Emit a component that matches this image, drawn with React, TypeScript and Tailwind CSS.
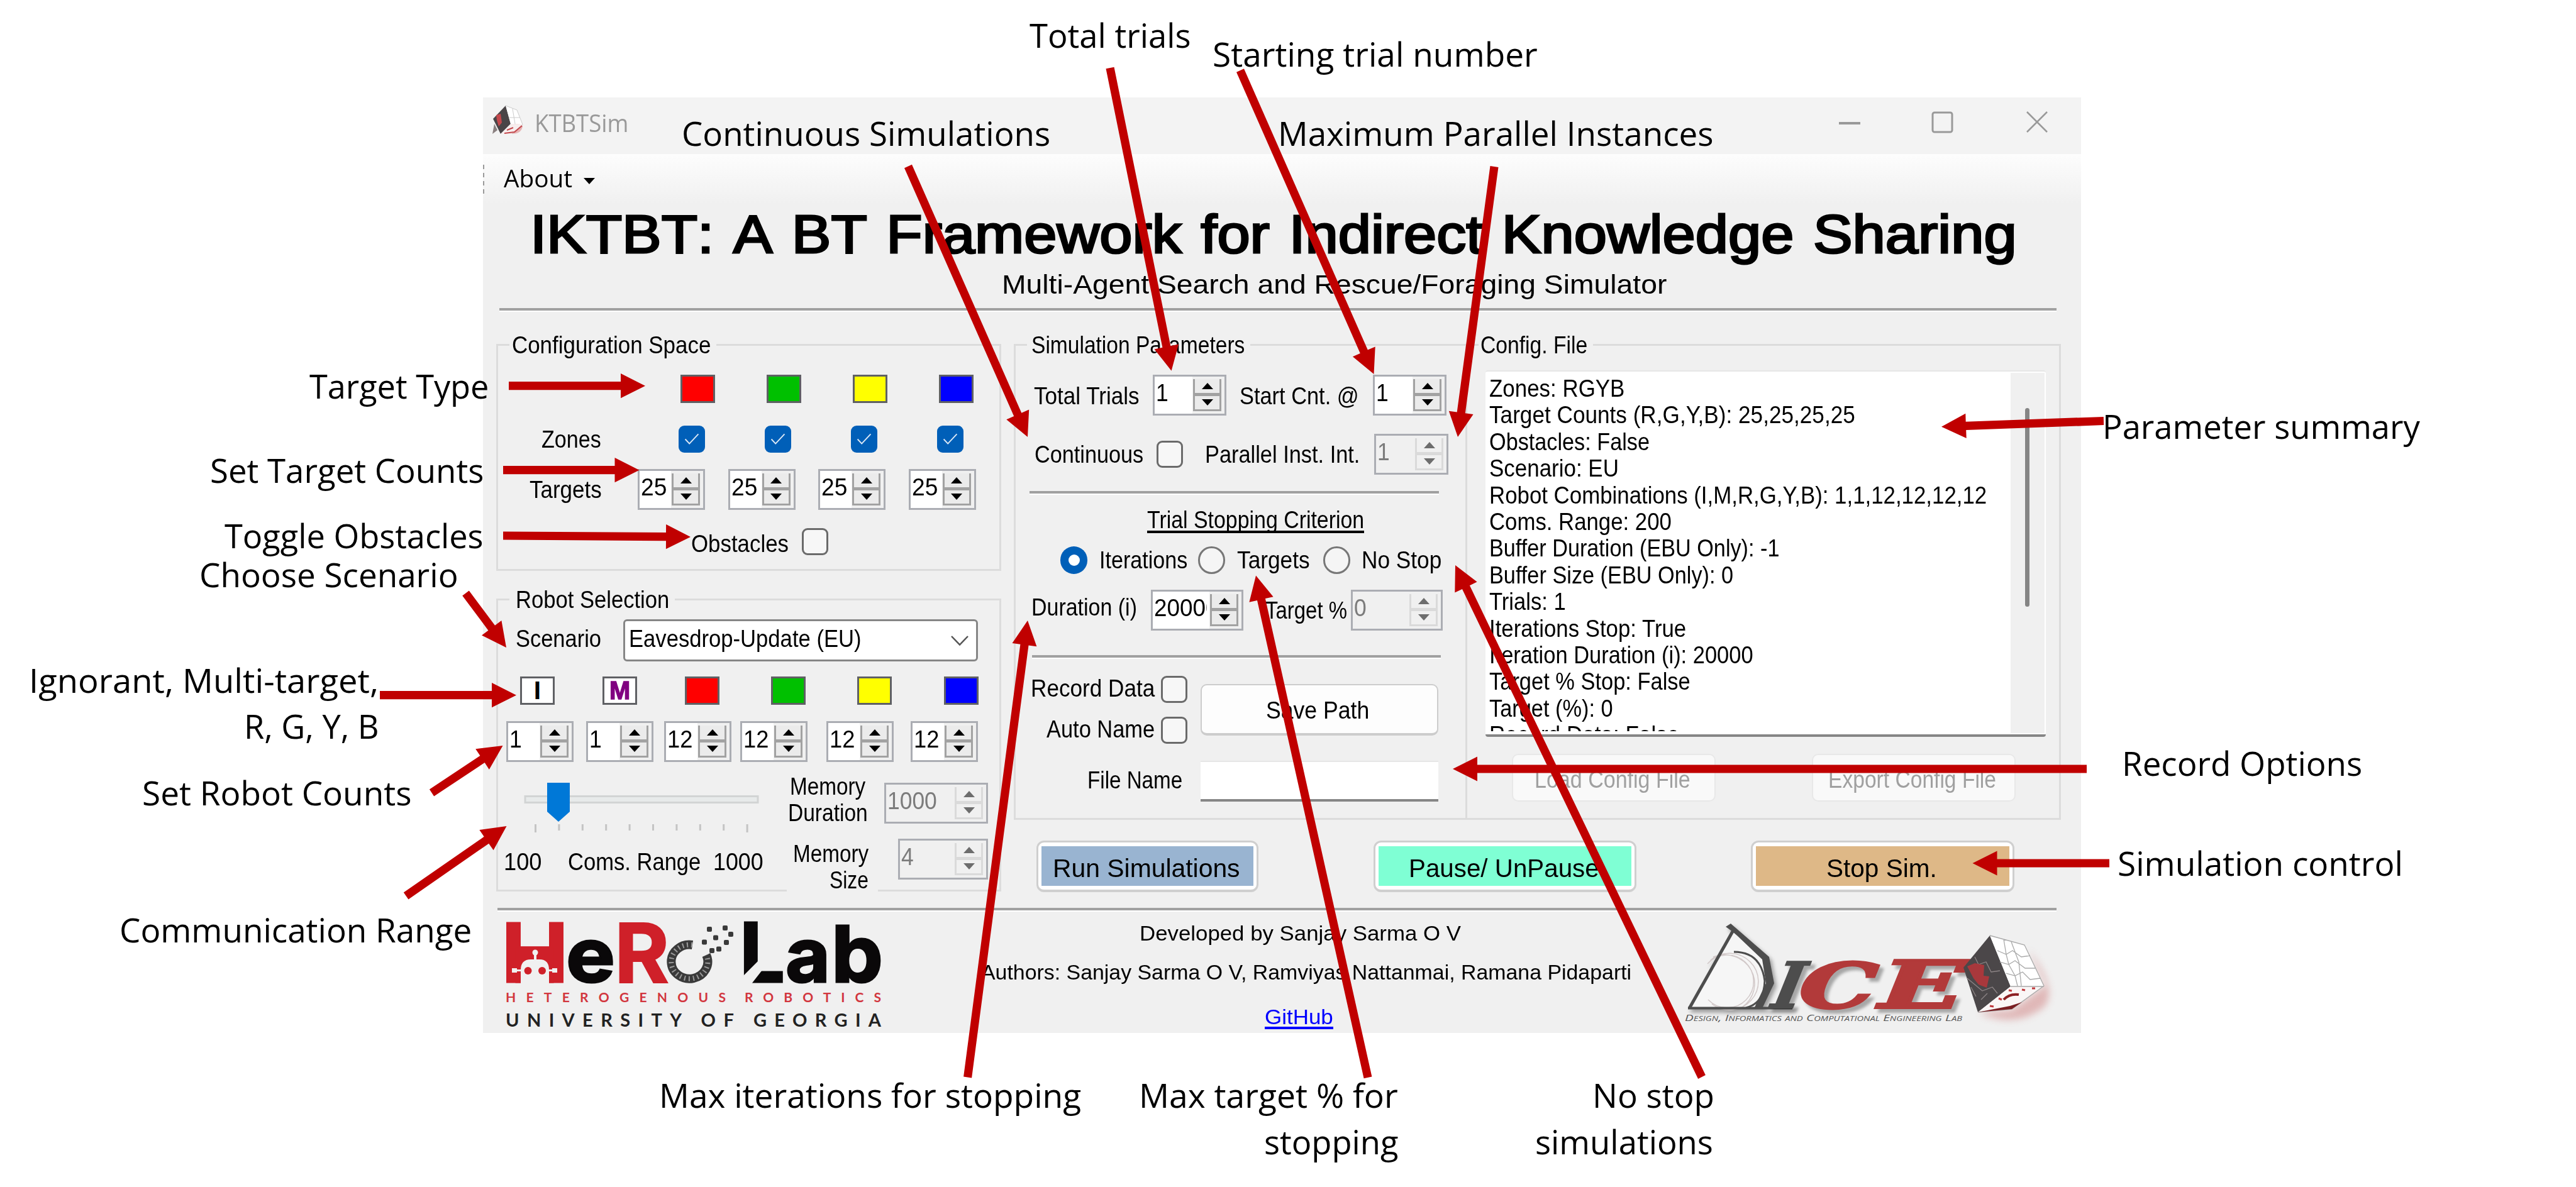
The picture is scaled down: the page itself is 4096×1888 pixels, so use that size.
import { useLayoutEffect, useRef } from "react";
import type { ReactNode } from "react";

/* One line of text, stretched horizontally to the width of its box. */
function Fit({ className = "", children }: { className?: string; children: ReactNode }) {
  const box = useRef<HTMLSpanElement>(null);
  const ink = useRef<HTMLSpanElement>(null);
  useLayoutEffect(() => {
    if (box.current && ink.current) {
      const ratio = box.current.clientWidth / ink.current.offsetWidth;
      ink.current.style.transform = `scaleX(${ratio})`;
    }
  }, [children]);
  return (
    <span ref={box} className={`block shrink-0 text-left leading-none ${className}`}>
      <span ref={ink} className="inline-block origin-left whitespace-pre align-top">
        {children}
      </span>
    </span>
  );
}

function Rule({ className = "" }: { className?: string }) {
  return <div className={`h-[6px] shrink-0 border-b-2 border-white bg-[#a0a0a0] ${className}`} />;
}

function Arrow({ up, off }: { up?: boolean; off?: boolean }) {
  return (
    <svg viewBox="0 0 18 10" className={`h-[10px] w-[18px] ${off ? "fill-[#6d6d6d]" : "fill-black"}`}>
      <path d={up ? "M9 0L18 10H0Z" : "M9 10L18 0H0Z"} />
    </svg>
  );
}

function Spinner({ w, value, tw, off }: { w: string; value: string; tw: string; off?: boolean }) {
  const line = off ? "border-[#dadada]" : "border-[#a2a2a2]";
  const cell = off ? "bg-[#f0f0f0]" : "bg-[#ebebeb]";
  return (
    <div className={`flex h-[65px] shrink-0 border-[3px] border-[#abadb3] ${off ? "bg-[#f0f0f0] text-[#7c7c7c]" : "bg-white"} ${w}`}>
      <div className="mr-[4px] min-w-0 flex-1 overflow-hidden pt-[5px] pl-[2px]">
        <Fit className={`h-[44px] pt-[1px] text-[39px] ${tw}`}>{value}</Fit>
      </div>
      <div className="flex w-[51px] shrink-0 flex-col bg-[#f0f0f0] pt-[4px] pr-[5px] pb-[4px] pl-[1px]">
        <div className={`flex flex-1 items-center justify-center border-x-[3px] border-b-[3px] ${line} ${cell}`}>
          <Arrow up off={off} />
        </div>
        <div className={`flex flex-1 items-center justify-center border-[3px] border-t-2 ${line} ${cell}`}>
          <Arrow off={off} />
        </div>
      </div>
    </div>
  );
}

function Check({ on }: { on?: boolean }) {
  return on ? (
    <div className="flex h-[43px] w-[42px] shrink-0 items-center justify-center rounded-[9px] bg-[#005fb8]">
      <svg viewBox="0 0 24 20" className="h-[19px] w-[24px] fill-none stroke-[#dbe9f6] stroke-[2]">
        <path d="M1 10L8 17.5L23 1.5" />
      </svg>
    </div>
  ) : (
    <div className="h-[43px] w-[42px] shrink-0 rounded-[9px] border-[3px] border-[#6a6a6a] bg-[#f7f7f7]" />
  );
}

function Radio({ on }: { on?: boolean }) {
  return on ? (
    <div className="flex h-[44px] w-[43px] shrink-0 items-center justify-center rounded-full bg-[#005fb8]">
      <div className="h-[18px] w-[18px] rounded-full bg-white" />
    </div>
  ) : (
    <div className="h-[44px] w-[43px] shrink-0 rounded-full border-[3px] border-[#777777] bg-[#f5f5f5]" />
  );
}

function Swatch({ className, children }: { className: string; children?: ReactNode }) {
  return (
    <div className={`flex h-[45px] w-[55px] shrink-0 items-center justify-center border-[3px] border-[#5f6064] text-[41px] leading-none font-bold ${className}`}>
      {children}
    </div>
  );
}

function Group({ className, title, tw, children }: { className: string; title: string; tw: string; children: ReactNode }) {
  return (
    <div className={`flex shrink-0 flex-col border-[3px] border-[#dcdcdc] ${className}`}>
      <div className="-mt-[20px] ml-[18px] flex h-[38px] shrink-0">
        <div className="flex bg-[#f0f0f0] pr-[9px] pl-[4px]">
          <Fit className={tw}>{title}</Fit>
        </div>
      </div>
      {children}
    </div>
  );
}

function ActionButton({ w, fill, tw, children }: { w: string; fill: string; tw: string; children: string }) {
  return (
    <div className={`flex h-[82px] shrink-0 rounded-[12px] border-[3px] border-b-[4px] border-[#cfcfcf] bg-white px-[5px] pt-[6px] pb-[6px] ${w}`}>
      <div className={`flex flex-1 items-center justify-center pt-[7px] pr-[3px] ${fill}`}>
        <Fit className={`text-[41px] ${tw}`}>{children}</Fit>
      </div>
    </div>
  );
}

function AppIcon() {
  return (
    <svg viewBox="0 0 50 50" className="mt-[12px] ml-[14px] h-[50px] w-[50px] shrink-0">
      <path d="M22 44Q46 50 49 34L40 26Z" className="fill-[#e08a8a] opacity-60" />
      <path d="M22 1L30 30L14 46L2 22Z" className="fill-[#4a4547]" />
      <path d="M22 1L40 8L49 31L30 30Z" className="fill-white" />
      <path d="M30 30L49 31L32 46L14 46Z" className="fill-[#f7eeee]" />
      <path d="M22 1L40 8L49 31L32 46M33 6L37 30M27 20L45 20" className="fill-none stroke-[#cccccc] stroke-1" />
      <path d="M7 16L14 14L16 28L11 34L8 24Z" className="fill-[#c4484c]" />
      <path d="M4 30L1 46L9 40Z" className="fill-[#8a8080]" />
      <path d="M24 40L34 36M20 45L36 43L48 33" className="fill-none stroke-[#c4484c] stroke-2" />
    </svg>
  );
}

function HeroLogo() {
  return (
    <svg viewBox="796 1460 612 180" className="mt-[10px] ml-[28px] h-[180px] w-[612px] shrink-0 font-['Inter'] font-bold">
      <g className="fill-[#cf2029] stroke-[#cf2029]">
        <text x="796" y="1563" fontSize="132" textLength="109" lengthAdjust="spacingAndGlyphs">H</text>
        <rect x="820" y="1507" width="60" height="56" />
      </g>
      <g className="fill-[#f0f0f0]">
        <path d="M828 1564V1543Q828 1526 844 1526H858Q873 1526 873 1543V1564Z" />
        <rect x="849" y="1515" width="4" height="14" />
        <circle cx="851" cy="1515" r="4.5" />
        <rect x="814" y="1540" width="8" height="7" />
        <rect x="818" y="1542" width="64" height="3" />
        <rect x="878" y="1540" width="8" height="7" />
      </g>
      <g className="fill-[#cf2029]">
        <circle cx="839.5" cy="1544" r="6" />
        <circle cx="862" cy="1544" r="6" />
      </g>
      <text x="900" y="1561.5" fontSize="120" textLength="78" lengthAdjust="spacingAndGlyphs" className="fill-[#0a0809] stroke-[#0a0809] stroke-[3]">e</text>
      <text x="977" y="1562.5" fontSize="131" textLength="87" lengthAdjust="spacingAndGlyphs" className="fill-[#cf2029] stroke-[#cf2029] stroke-[2]">R</text>
      <path d="M1101 1503A29 27 0 1 0 1123 1519" className="fill-none stroke-[#3a3a3a] stroke-[14]" />
      <path d="M1101 1503A29 27 0 1 0 1123 1519" strokeDasharray="2 5" className="fill-none stroke-[#9a9a9a] stroke-[8]" />
      <g className="fill-[#3a3a3a]">
        {[[1128, 1478], [1153, 1476], [1162, 1486], [1138, 1491.5], [1120, 1498.5], [1155, 1499], [1143, 1509.5], [1132, 1512]].map(([x, y]) => (
          <rect key={x} x={x - 4} y={y - 4} width="8" height="8" rx="2" />
        ))}
      </g>
      <g className="fill-[#0a0809] stroke-[#0a0809] stroke-[3]">
        <text x="1176" y="1562" fontSize="130" textLength="72" lengthAdjust="spacingAndGlyphs">L</text>
        <text x="1249" y="1561.5" fontSize="120" textLength="71" lengthAdjust="spacingAndGlyphs">a</text>
        <text x="1322" y="1561.5" fontSize="124" textLength="82" lengthAdjust="spacingAndGlyphs">b</text>
      </g>
      <path d="M1181 1553L1206 1528L1212 1543L1194 1566H1181Z" className="fill-[#f0f0f0]" />
      <g className="font-['Lato'] font-bold">
        <text x="804" y="1594" fontSize="21" textLength="350" className="fill-[#d2363e]">HETEROGENOUS</text>
        <text x="1184" y="1594" fontSize="21" textLength="217" className="fill-[#d2363e]">ROBOTICS</text>
        <text x="804" y="1633" fontSize="29" textLength="597" className="fill-[#222222]">UNIVERSITY OF GEORGIA</text>
      </g>
    </svg>
  );
}

function DiceLogo() {
  return (
    <svg viewBox="2670 1463 610 170" className="mt-[13px] h-[170px] w-[610px] shrink-0 overflow-visible">
      <g className="drop-shadow-[4px_5px_3px_rgba(0,0,0,0.35)]">
        <path d="M2686 1604L2755 1480L2803 1526L2809 1564L2791 1604Z" className="fill-[#f6f6f6]" />
        <path d="M2715 1533A42 42 0 1 1 2716 1590M2720 1527A46 45 0 1 1 2722 1597M2724 1522A48 46 0 0 1 2770 1602" className="fill-none stroke-[#d2c9c9] stroke-[1.5]" />
        <path d="M2757 1514Q2800 1514 2806 1560Q2805 1596 2776 1603" className="fill-none stroke-[#4d4d4d] stroke-[3]" />
        <path d="M2686 1604L2757 1478" className="stroke-[#4d4d4d] stroke-[5]" />
        <path d="M2684 1603.500H2850" className="stroke-[#4d4d4d] stroke-[4]" />
        <path d="M2744 1474L2752 1469L2813 1522L2821 1564L2802 1604H2789L2808 1564L2802 1526L2762 1488L2755 1482Z" className="fill-[#4d4d4d]" />
      </g>
      <g className="font-['DejaVu_Serif'] font-bold drop-shadow-[6px_6px_2px_rgba(0,0,0,0.3)]">
        <g transform="translate(0 1603) skewX(-22)">
          <text x="2807" y="0" fontSize="101" textLength="48" lengthAdjust="spacingAndGlyphs" className="fill-[#4d4d4d] stroke-[#4d4d4d] stroke-[2]">I</text>
          <text x="2848" y="0" fontSize="99" textLength="122" lengthAdjust="spacingAndGlyphs" className="fill-[#b23a3a] stroke-[#b23a3a] stroke-[4]">C</text>
          <text x="2975" y="0" fontSize="104" textLength="134" lengthAdjust="spacingAndGlyphs" className="fill-[#b23a3a] stroke-[#b23a3a] stroke-[4]">E</text>
        </g>
      </g>
      <path d="M3150 1610L3199 1606L3252 1568L3225 1510Q3272 1570 3252 1600Q3210 1636 3150 1613Z" className="fill-[#c86464] opacity-40 blur-[6px]" />
      <path d="M3164 1488L3197 1569L3145 1610L3122 1539Z" className="fill-[#4b4749]" />
      <path d="M3164 1488L3219 1503L3250 1568L3197 1569Z" className="fill-white" />
      <path d="M3197 1569L3250 1568L3199 1605L3145 1610Z" className="fill-[#faf6f6]" />
      <path d="M3164 1488L3219 1503L3250 1568L3199 1605L3145 1610M3197 1569H3250M3198 1498L3210 1530L3214 1568M3176 1512L3190 1518L3200 1512L3214 1522L3228 1520M3180 1530L3194 1534L3204 1528L3220 1540L3236 1540M3190 1548L3204 1552L3216 1546L3228 1558L3244 1556M3186 1494L3190 1518L3194 1534L3204 1552L3208 1568" className="fill-none stroke-[#a9a9a9] stroke-[1.3]" />
      <path d="M3140 1522L3146 1534L3158 1530L3166 1546L3180 1544M3128 1556L3140 1566L3152 1576L3168 1570L3176 1580M3150 1590L3160 1580M3142 1585L3134 1570" className="fill-none stroke-[#8d8586] stroke-[1.3]" />
      <path d="M3128 1537L3140 1532L3155 1535L3154 1552L3163 1553L3159 1571L3146 1566L3138 1556Z" className="fill-[#a8383c]" />
      <path d="M3186 1590Q3195 1580 3210 1582" className="fill-none stroke-[#8c2024] stroke-[4]" />
      <path d="M3178 1588l5 2M3164 1600l6 1M3194 1575l5 1M3215 1574l5 1M3231 1572l5 0" className="stroke-[#c0393d] stroke-[3]" />
      <path d="M3145 1610L3199 1605L3215 1594L3196 1600Z" className="fill-[#7a1e22]" />
      <text x="2679" y="1624" fontSize="14" textLength="441" lengthAdjust="spacingAndGlyphs" className="fill-[#555555] font-['Open_Sans'] italic [font-variant:small-caps]">
        Design, Informatics and Computational Engineering Lab
      </text>
    </svg>
  );
}

function ConfigurationSpace() {
  return (
    <Group className="mt-[51px] h-[361px] w-[803px]" title="Configuration Space" tw="w-[316px]">
      <div className="mt-[28px] ml-[290px] flex gap-[82px]">
        <Swatch className="bg-[#ff0000]" />
        <Swatch className="bg-[#00c000]" />
        <Swatch className="bg-[#ffff00]" />
        <Swatch className="bg-[#0000ff]" />
      </div>
      <div className="mt-[36px] ml-[69px] flex h-[43px] items-center">
        <Fit className="mr-[123px] w-[95px]">Zones</Fit>
        <div className="flex gap-[95px]">
          <Check on />
          <Check on />
          <Check on />
          <Check on />
        </div>
      </div>
      <div className="mt-[26px] ml-[50px] flex h-[65px] items-center">
        <Fit className="mr-[57px] w-[115px]">Targets</Fit>
        <div className="flex gap-[36.500px]">
          <Spinner w="w-[107px]" tw="w-[41px]" value="25" />
          <Spinner w="w-[107px]" tw="w-[41px]" value="25" />
          <Spinner w="w-[107px]" tw="w-[41px]" value="25" />
          <Spinner w="w-[107px]" tw="w-[41px]" value="25" />
        </div>
      </div>
      <div className="mt-[29px] ml-[307px] flex h-[43px] items-center">
        <Fit className="mt-[6px] mr-[21px] w-[155px]">Obstacles</Fit>
        <Check />
      </div>
    </Group>
  );
}

function RangeSlider() {
  return (
    <svg viewBox="0 0 407 84" className="mt-[33px] h-[84px] w-[407px] shrink-0">
      <rect x="30" y="21.500" width="370" height="10" className="fill-[#e7eaea] stroke-[#d2d4d4] stroke-[3]" />
      <path d="M65 0H101V46L83 62L65 46Z" className="fill-[#0078d7]" />
      {[0, 1, 2, 3, 4, 5, 6, 7, 8, 9].map((i) => (
        <rect key={i} x={45 + i * 37.4} y="66" width="3" height={i % 9 === 0 ? 13 : 10} className="fill-[#c4c4c4]" />
      ))}
    </svg>
  );
}

function RobotSelection() {
  return (
    <Group className="mt-[44px] h-[466px] w-[803px]" title="Robot Selection" tw="ml-[6px] w-[244px]">
      <div className="mt-[12px] ml-[28px] flex h-[67px] items-center">
        <Fit className="mr-[35px] mb-[6px] w-[136px]">Scenario</Fit>
        <div className="flex h-[67px] w-[564px] items-center justify-between rounded-[6px] border-[3px] border-[#868686] bg-white pr-[12px] pb-[5px] pl-[6px]">
          <Fit className="w-[370px]">Eavesdrop-Update (EU)</Fit>
          <svg viewBox="0 0 28 16" className="mt-[6px] h-[16px] w-[28px] fill-none stroke-[#555555] stroke-[2.5]">
            <path d="M1 1L14 14.500L27 1" />
          </svg>
        </div>
      </div>
      <div className="mt-[24px] ml-[35px] flex h-[45px]">
        <Swatch className="mr-[76px] bg-white text-black">I</Swatch>
        <Swatch className="mr-[76px] bg-white text-[#800080]">
          <Fit className="w-[33px] [-webkit-text-stroke:1.5px_#800080]">M</Fit>
        </Swatch>
        <Swatch className="mr-[82px] bg-[#ff0000]" />
        <Swatch className="mr-[82px] bg-[#00c000]" />
        <Swatch className="mr-[83px] bg-[#ffff00]" />
        <Swatch className="bg-[#0000ff]" />
      </div>
      <div className="mt-[26px] ml-[13px] flex h-[65px]">
        <Spinner w="mr-[20px] w-[107px]" tw="w-[20px]" value="1" />
        <Spinner w="mr-[17px] w-[107px]" tw="w-[20px]" value="1" />
        <Spinner w="mr-[14px] w-[107px]" tw="w-[40px]" value="12" />
        <Spinner w="mr-[30px] w-[107px]" tw="w-[40px]" value="12" />
        <Spinner w="mr-[27px] w-[107px]" tw="w-[40px]" value="12" />
        <Spinner w="w-[107px]" tw="w-[40px]" value="12" />
      </div>
      <div className="ml-[13px] flex">
        <div className="flex w-[407px] shrink-0 flex-col">
          <RangeSlider />
          <div className="mt-[23px] flex">
            <Fit className="-ml-[4px] w-[60px]">100</Fit>
            <Fit className="ml-[42px] w-[211px]">Coms. Range</Fit>
            <Fit className="ml-[20px] w-[80px]">1000</Fit>
          </div>
        </div>
        <div className="mt-[18px] ml-[39px] flex w-[145px] shrink-0 flex-col items-end pr-[16px]">
          <Fit className="mr-[4px] h-[42px] w-[120px] pt-[2px]">Memory</Fit>
          <Fit className="h-[42px] w-[127px] pt-[2px]">Duration</Fit>
          <div className="mt-[24px] -mr-[16px] flex w-[145px] flex-col items-end bg-[#f0f0f0] pr-[15px]">
            <Fit className="h-[42px] w-[120px] pt-[1px]">Memory</Fit>
            <Fit className="h-[44px] w-[62px] pt-[1px]">Size</Fit>
          </div>
        </div>
        <div className="mt-[33px] flex w-[175px] shrink-0 flex-col items-end gap-[24px]">
          <Spinner w="w-[165px]" tw="w-[79px]" value="1000" off />
          <Spinner w="w-[143px]" tw="w-[20px]" value="4" off />
        </div>
      </div>
    </Group>
  );
}

function SimulationParameters() {
  return (
    <Group className="h-[757px] w-[721px]" title="Simulation Parameters" tw="ml-[3px] w-[339px]">
      <div className="mt-[28px] ml-[29px] flex h-[65px] items-center">
        <Fit className="mt-[3px] mr-[21px] w-[168px]">Total Trials</Fit>
        <Spinner w="w-[117px]" tw="w-[20px]" value="1" />
        <Fit className="mt-[3px] mr-[22px] ml-[21px] w-[190px]">Start Cnt. @</Fit>
        <Spinner w="w-[117px]" tw="w-[20px]" value="1" />
      </div>
      <div className="mt-[29px] ml-[30px] flex h-[65px] items-center">
        <Fit className="mr-[21px] w-[173px]">Continuous</Fit>
        <Check />
        <Fit className="mr-[23px] ml-[35px] w-[246px]">Parallel Inst. Int.</Fit>
        <Spinner w="w-[118px]" tw="w-[20px]" value="1" off />
      </div>
      <Rule className="mt-[26px] ml-[22px] w-[651px]" />
      <Fit className="mt-[21px] ml-[209px] h-[40px] w-[345px] border-b-[4px] border-black">Trial Stopping Criterion</Fit>
      <div className="mt-[21px] ml-[71px] flex h-[44px] items-center">
        <Radio on />
        <Fit className="mr-[17px] ml-[19px] w-[140px]">Iterations</Fit>
        <Radio />
        <Fit className="mr-[21px] ml-[19px] w-[116px]">Targets</Fit>
        <Radio />
        <Fit className="ml-[18px] w-[127px]">No Stop</Fit>
      </div>
      <div className="mt-[25px] ml-[25px] flex h-[65px] items-center">
        <Fit className="mr-[22px] mb-[9px] w-[168px]">Duration (i)</Fit>
        <Spinner w="w-[147px]" tw="w-[102px]" value="20000" />
        <Fit className="mr-[6px] ml-[35px] w-[130px]">Target %</Fit>
        <Spinner w="w-[146px]" tw="w-[20px]" value="0" off />
      </div>
      <Rule className="mt-[39px] ml-[26px] w-[650px]" />
      <div className="mt-[27px] flex h-[108px]">
        <div className="flex w-[273px] flex-col items-end gap-[22px]">
          <div className="flex items-center">
            <Fit className="mr-[10px] mb-[4px] w-[197px]">Record Data</Fit>
            <Check />
          </div>
          <div className="flex items-center">
            <Fit className="mr-[10px] mb-[4px] w-[172px]">Auto Name</Fit>
            <Check />
          </div>
        </div>
        <div className="mt-[13px] ml-[21px] flex h-[82px] w-[378px] items-center justify-center rounded-[10px] border-2 border-b-[4px] border-[#cccccc] bg-[#fdfdfd] pt-[4px]">
          <Fit className="mr-[6px] w-[164px]">Save Path</Fit>
        </div>
      </div>
      <div className="mt-[27px] ml-[114px] flex h-[65px] items-center">
        <Fit className="mr-[29px] mb-[3px] w-[151px]">File Name</Fit>
        <div className="h-[65px] w-[378px] border-t-2 border-b-[4px] border-t-[#e6e6e6] border-b-[#868686] bg-white" />
      </div>
    </Group>
  );
}

function ConfigFile() {
  return (
    <Group className="-ml-[3px] h-[757px] w-[947px]" title="Config. File" tw="-ml-[1px] w-[170px]">
      <div className="mt-[21px] ml-[29px] flex h-[583px] w-[891px] rounded-[4px] border-t-2 border-b-[4px] border-t-[#e6e6e6] border-b-[#868686] bg-white">
        <div className="flex h-[572px] flex-1 flex-col overflow-hidden pt-[8px] pl-[6px]">
          <Fit className="h-[42.400px] w-[215px]">Zones: RGYB</Fit>
          <Fit className="h-[42.400px] w-[582px]">Target Counts (R,G,Y,B): 25,25,25,25</Fit>
          <Fit className="h-[42.400px] w-[255px]">Obstacles: False</Fit>
          <Fit className="h-[42.400px] w-[206px]">Scenario: EU</Fit>
          <Fit className="h-[42.400px] w-[791px]">Robot Combinations (I,M,R,G,Y,B): 1,1,12,12,12,12</Fit>
          <Fit className="h-[42.400px] w-[290px]">Coms. Range: 200</Fit>
          <Fit className="h-[42.400px] w-[461px]">Buffer Duration (EBU Only): -1</Fit>
          <Fit className="h-[42.400px] w-[388px]">Buffer Size (EBU Only): 0</Fit>
          <Fit className="h-[42.400px] w-[122px]">Trials: 1</Fit>
          <Fit className="h-[42.400px] w-[313px]">Iterations Stop: True</Fit>
          <Fit className="h-[42.400px] w-[420px]">Iteration Duration (i): 20000</Fit>
          <Fit className="h-[42.400px] w-[320px]">Target % Stop: False</Fit>
          <Fit className="h-[42.400px] w-[197px]">Target (%): 0</Fit>
          <Fit className="h-[42.400px] w-[302px]">Record Data: False</Fit>
        </div>
        <div className="mt-[2px] mr-[2px] h-[573px] w-[54px] bg-[#f0f0f0] pt-[56px] pl-[23px]">
          <div className="h-[316px] w-[7px] rounded-full bg-[#858585]" />
        </div>
      </div>
      <div className="mt-[27px] ml-[71px] flex gap-[153px] text-[#a0a0a0]">
        <div className="flex h-[76px] w-[324px] items-center justify-center rounded-[10px] border-2 border-[#e8e8e8] bg-[#f9f9f9] pt-[6px] pr-[5px]">
          <Fit className="w-[248px]">Load Config File</Fit>
        </div>
        <div className="flex h-[76px] w-[324px] items-center justify-center rounded-[10px] border-2 border-[#e8e8e8] bg-[#f9f9f9] pt-[6px] pr-[5px]">
          <Fit className="w-[267px]">Export Config File</Fit>
        </div>
      </div>
    </Group>
  );
}

function SimulatorWindow() {
  return (
    <div className="flex h-[1488px] w-[2541px] flex-col overflow-hidden bg-[#f0f0f0] font-['Liberation_Sans',sans-serif] text-[38px] text-black">
      <div className="flex h-[90px] shrink-0 bg-[#f3f3f3] text-[#999999]">
        <AppIcon />
        <Fit className="mt-[20px] ml-[18px] w-[149px] font-['Open_Sans'] text-[39px]">KTBTSim</Fit>
        <svg viewBox="0 0 334 36" className="mt-[21px] ml-[1925px] h-[36px] w-[334px] fill-none stroke-[#999999]">
          <path d="M0 20H34" className="stroke-[4]" />
          <rect x="149" y="3" width="31" height="31" rx="3" className="stroke-[3]" />
          <path d="M299 2L331 34M331 2L299 34" className="stroke-[2.5]" />
        </svg>
      </div>
      <div className="flex h-[80px] shrink-0 items-center bg-linear-to-b from-[#fdfdfd] to-[#f0f0f0]">
        <div className="flex flex-col gap-[6px]">
          <div className="h-[7px] w-[2px] bg-[#9a9a9a]" />
          <div className="h-[7px] w-[2px] bg-[#9a9a9a]" />
          <div className="h-[7px] w-[2px] bg-[#9a9a9a]" />
          <div className="h-[7px] w-[2px] bg-[#9a9a9a]" />
        </div>
        <Fit className="mb-[4px] ml-[31px] w-[109px] font-['Open_Sans']">About</Fit>
        <svg viewBox="0 0 18 10" className="mt-[6px] ml-[18px] h-[10px] w-[18px]">
          <path d="M0 0H18L9 10Z" />
        </svg>
      </div>
      <div className="flex h-[94px] shrink-0 items-center pl-[75px]">
        <Fit className="w-[2364px] text-[85px] [word-spacing:4px] [-webkit-text-stroke:3px_black] [font-kerning:none]">IKTBT: A BT Framework for Indirect Knowledge Sharing</Fit>
      </div>
      <div className="flex h-[67px] shrink-0 items-center pl-[825px]">
        <Fit className="w-[1057px] text-[43px]">Multi-Agent Search and Rescue/Foraging Simulator</Fit>
      </div>
      <Rule className="mt-[4px] ml-[26px] w-[2476px]" />
      <div className="flex h-[948px] shrink-0 pl-[21px]">
        <div className="flex w-[803px] shrink-0 flex-col">
          <ConfigurationSpace />
          <RobotSelection />
        </div>
        <div className="ml-[20px] flex flex-col pt-[51px]">
          <div className="flex">
            <SimulationParameters />
            <ConfigFile />
          </div>
          <div className="mt-[33px] ml-[36px] flex">
            <ActionButton w="mr-[183px] w-[353px]" fill="bg-[#99b4d1]" tw="w-[298px]">Run Simulations</ActionButton>
            <ActionButton w="mr-[182px] w-[418px]" fill="bg-[#7fffd4]" tw="w-[303px]">Pause/ UnPause</ActionButton>
            <ActionButton w="w-[419px]" fill="bg-[#deb887]" tw="w-[176px]">Stop Sim.</ActionButton>
          </div>
        </div>
      </div>
      <Rule className="ml-[23px] w-[2479px]" />
      <div className="flex h-[193px] shrink-0">
        <HeroLogo />
        <div className="flex w-[1262px] shrink-0 flex-col pl-[152px] text-[34px]">
          <Fit className="mt-[17px] ml-[252px] w-[511px]">Developed by Sanjay Sarma O V</Fit>
          <Fit className="mt-[28px] w-[1034px]">Authors: Sanjay Sarma O V, Ramviyas Nattanmai, Ramana Pidaparti</Fit>
          <Fit className="mt-[37px] ml-[451px] h-[37px] w-[109px] border-b-[4px] border-[#0000ff] text-[#0000ff]">GitHub</Fit>
        </div>
        <DiceLogo />
      </div>
    </div>
  );
}

/* Callout arrows: tail x, y, then tip x, y. */
const arrows = [
  [809, 613.7, 1026, 613.7],
  [800, 747.7, 1016.5, 747.7],
  [800, 852, 1098, 854],
  [740.5, 943.5, 805, 1030],
  [604, 1105.7, 821, 1105.7],
  [686.5, 1261, 799.5, 1186],
  [645.6, 1425, 805.5, 1314],
  [1444, 264.5, 1634, 695],
  [1765, 108, 1862.6, 589.7],
  [1972, 112, 2184.5, 595],
  [2376, 265, 2318, 695],
  [3345, 669.5, 3087, 678.8],
  [3318, 1223, 2310, 1223],
  [3354, 1373, 3136.5, 1373],
  [1538.6, 1713.5, 1634, 987],
  [2175, 1713.8, 1997, 915.4],
  [2706, 1713, 2314, 899],
];

function arrowPath([x1, y1, x2, y2]: number[]) {
  const len = Math.hypot(x2 - x1, y2 - y1);
  const ux = (x2 - x1) / len;
  const uy = (y2 - y1) / len;
  const at = (d: number, s: number) => `${(x2 - ux * d - uy * s).toFixed(1)} ${(y2 - uy * d + ux * s).toFixed(1)}`;
  return `M${at(0, 0)}L${at(39, 19.6)}L${at(39, 6.6)}L${at(len, 6.6)}L${at(len, -6.6)}L${at(39, -6.6)}L${at(39, -19.6)}Z`;
}

function Callouts() {
  return (
    <div className="absolute inset-0 font-['Open_Sans',sans-serif] text-[53px] text-black">
      <svg viewBox="0 0 4096 1888" className="absolute inset-0 h-[1888px] w-[4096px] fill-[#c00000]">
        {arrows.map((a) => (
          <path key={a.join()} d={arrowPath(a)} />
        ))}
      </svg>
      <Fit className="absolute top-[29px] left-[1637px] w-[257px]">Total trials</Fit>
      <Fit className="absolute top-[59px] left-[1928px] w-[517px]">Starting trial number</Fit>
      <Fit className="absolute top-[185px] left-[1084px] w-[586px]">Continuous Simulations</Fit>
      <Fit className="absolute top-[185px] left-[2032px] w-[693px]">Maximum Parallel Instances</Fit>
      <Fit className="absolute top-[587px] left-[492px] w-[285px]">Target Type</Fit>
      <Fit className="absolute top-[721px] left-[334px] w-[435px]">Set Target Counts</Fit>
      <Fit className="absolute top-[825px] left-[357px] w-[412px]">Toggle Obstacles</Fit>
      <Fit className="absolute top-[887px] left-[317px] w-[412px]">Choose Scenario</Fit>
      <Fit className="absolute top-[1055px] left-[46px] w-[556px]">Ignorant, Multi-target,</Fit>
      <Fit className="absolute top-[1128px] left-[388px] w-[215px]">R, G, Y, B</Fit>
      <Fit className="absolute top-[1234px] left-[226px] w-[428px]">Set Robot Counts</Fit>
      <Fit className="absolute top-[1452px] left-[190px] w-[560px]">Communication Range</Fit>
      <Fit className="absolute top-[1715px] left-[1048px] w-[671px]">Max iterations for stopping</Fit>
      <Fit className="absolute top-[1715px] left-[1811px] w-[412px]">Max target % for</Fit>
      <Fit className="absolute top-[1789px] left-[2010px] w-[214px]">stopping</Fit>
      <Fit className="absolute top-[1715px] left-[2532px] w-[194px]">No stop</Fit>
      <Fit className="absolute top-[1789px] left-[2441px] w-[283px]">simulations</Fit>
      <Fit className="absolute top-[651px] left-[3343px] w-[505px]">Parameter summary</Fit>
      <Fit className="absolute top-[1187px] left-[3374px] w-[382px]">Record Options</Fit>
      <Fit className="absolute top-[1346px] left-[3367px] w-[454px]">Simulation control</Fit>
    </div>
  );
}

export default function App() {
  return (
    <div className="relative h-[1888px] w-[4096px] overflow-hidden bg-white pt-[155px] pl-[768px]">
      <SimulatorWindow />
      <Callouts />
    </div>
  );
}
